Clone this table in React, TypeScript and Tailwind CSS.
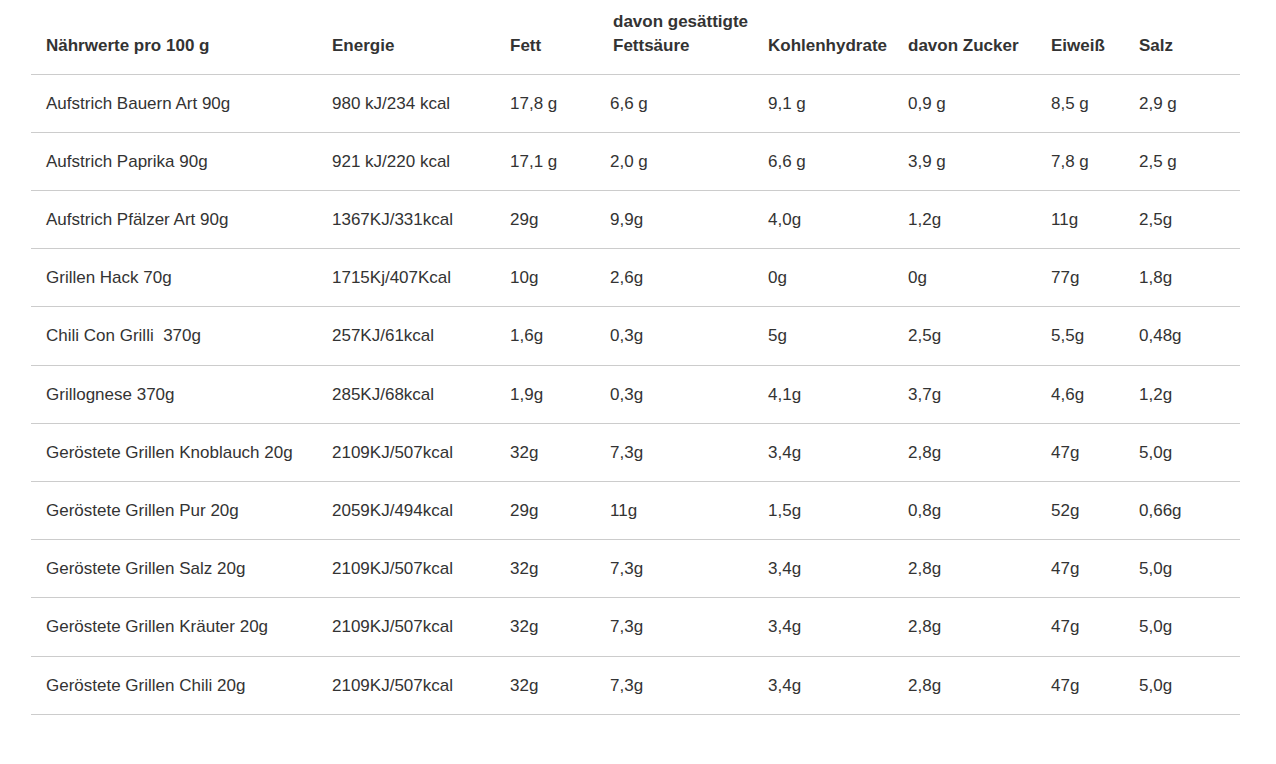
import React from 'react';

const COLUMNS = [
  { label: 'Nährwerte pro 100 g', width: 'w-[286px]' },
  { label: 'Energie', width: 'w-[178px]' },
  { label: 'Fett', width: 'w-[100px]' },
  { label: 'davon gesättigte Fettsäure', width: 'w-[158px]', shift: true },
  { label: 'Kohlenhydrate', width: 'w-[140px]' },
  { label: 'davon Zucker', width: 'w-[143px]' },
  { label: 'Eiweiß', width: 'w-[88px]' },
  { label: 'Salz', width: 'w-[116px]' }
];

const ROWS = [
  ['Aufstrich Bauern Art 90g', '980 kJ/234 kcal', '17,8 g', '6,6 g', '9,1 g', '0,9 g', '8,5 g', '2,9 g'],
  ['Aufstrich Paprika 90g', '921 kJ/220 kcal', '17,1 g', '2,0 g', '6,6 g', '3,9 g', '7,8 g', '2,5 g'],
  ['Aufstrich Pfälzer Art 90g', '1367KJ/331kcal', '29g', '9,9g', '4,0g', '1,2g', '11g', '2,5g'],
  ['Grillen Hack 70g', '1715Kj/407Kcal', '10g', '2,6g', '0g', '0g', '77g', '1,8g'],
  ['Chili Con Grilli\u00a0 370g', '257KJ/61kcal', '1,6g', '0,3g', '5g', '2,5g', '5,5g', '0,48g'],
  ['Grillognese\u00a0370g', '285KJ/68kcal', '1,9g', '0,3g', '4,1g', '3,7g', '4,6g', '1,2g'],
  ['Geröstete Grillen Knoblauch 20g', '2109KJ/507kcal', '32g', '7,3g', '3,4g', '2,8g', '47g', '5,0g'],
  ['Geröstete Grillen Pur 20g', '2059KJ/494kcal', '29g', '11g', '1,5g', '0,8g', '52g', '0,66g'],
  ['Geröstete Grillen Salz\u00a020g', '2109KJ/507kcal', '32g', '7,3g', '3,4g', '2,8g', '47g', '5,0g'],
  ['Geröstete Grillen Kräuter 20g', '2109KJ/507kcal', '32g', '7,3g', '3,4g', '2,8g', '47g', '5,0g'],
  ['Geröstete Grillen Chili 20g', '2109KJ/507kcal', '32g', '7,3g', '3,4g', '2,8g', '47g', '5,0g']
];

export default function App() {
  return (
    <div className="min-h-screen bg-white pl-[31px] pr-[36px] text-[17px] text-[#333333] font-['Liberation_Sans',Arial,sans-serif]">
      <table className="w-[1209px] table-fixed border-collapse">
        <thead>
          <tr className="h-[74px] border-b border-[#cccccc]">
            {COLUMNS.map(col => (
              <th
                key={col.label}
                className={`${col.width} align-bottom pb-[16px] pr-0 text-left font-bold leading-[24px] ${col.shift ? 'pl-[18px]' : 'pl-[15px]'}`}
              >
                {col.shift ? (
                  <>
                    <span className="whitespace-nowrap">davon gesättigte</span>
                    <br />
                    Fettsäure
                  </>
                ) : (
                  col.label
                )}
              </th>
            ))}
          </tr>
        </thead>
        <tbody>
          {ROWS.map((row, i) => (
            <tr key={i} className="border-b border-[#cccccc]">
              {row.map((cell, j) => (
                <td key={j} className="py-[17px] pl-[15px] pr-0 leading-[23.2px] whitespace-nowrap">
                  {cell}
                </td>
              ))}
            </tr>
          ))}
        </tbody>
      </table>
    </div>
  );
}
